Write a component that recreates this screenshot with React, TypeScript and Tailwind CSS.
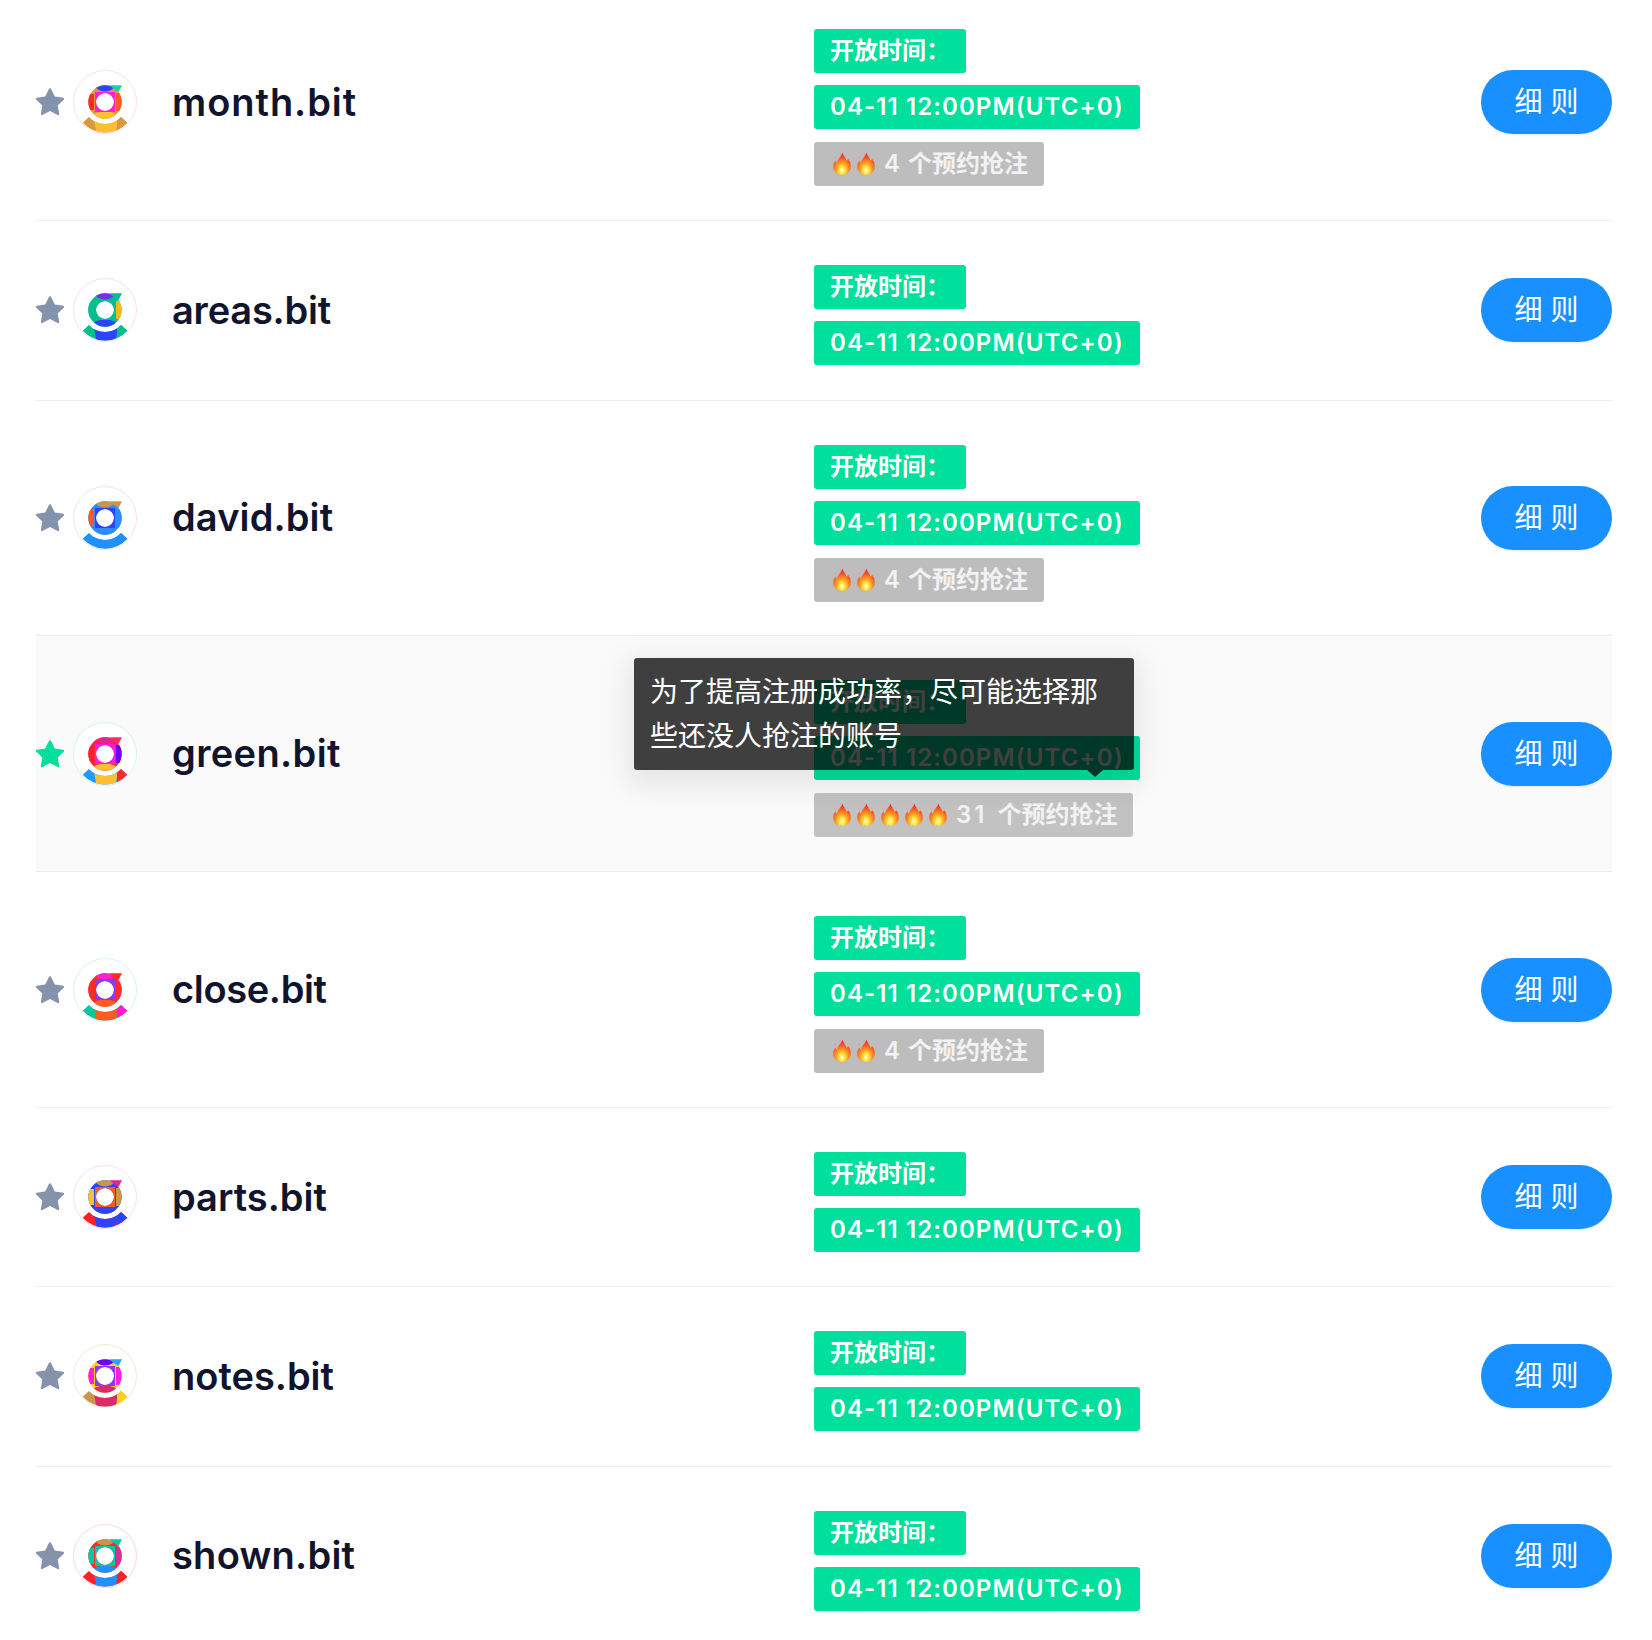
import React from 'react';

type Logo = {
  border: string;
  base: string;
  top: string;
  left: string;
  right: string;
  bottom: string;
  inner: string;
  tail: string;
  smile: string;
  smileMid: string;
  smileEnd: string;
};

type Item = { name: string; tracking: string; logo: Logo; hot?: number; count?: number; active?: boolean };

const items: Item[] = [
  {
    name: 'month.bit', tracking: 'tracking-[0.95px]', hot: 2, count: 4,
    logo: { border: '#ffe3da', base: '#d99a3f', top: '#2b44ff', left: '#ff2b2b', right: '#ff5a1f', bottom: '#ffbf2e', inner: '#ff1fd6', tail: '#12d0b0', smile: '#d99a3f', smileMid: '#ffbf2e', smileEnd: '#d99a3f' },
  },
  {
    name: 'areas.bit', tracking: 'tracking-[-0.2px]',
    logo: { border: '#fbdcfb', base: '#00bf8f', top: '#7a2bf0', left: '#00bf8f', right: '#ffb520', bottom: '#2b44ff', inner: '#00bf8f', tail: '#00bf8f', smile: '#00bf8f', smileMid: '#2b44ff', smileEnd: '#00bf8f' },
  },
  {
    name: 'david.bit', tracking: 'tracking-[0.13px]', hot: 2, count: 4,
    logo: { border: '#fbdfe8', base: '#2f8bff', top: '#c9964a', left: '#ff5a1f', right: '#2f8bff', bottom: '#2f8bff', inner: '#2b44ff', tail: '#c9964a', smile: '#1f90ff', smileMid: '#1f90ff', smileEnd: '#1f90ff' },
  },
  {
    name: 'green.bit', tracking: 'tracking-[0.37px]', hot: 5, count: 31, active: true,
    logo: { border: '#d5f5ee', base: '#ff2244', top: '#e0259a', left: '#ff2222', right: '#6a00ff', bottom: '#ffbf2e', inner: '#ff1fd6', tail: '#ff2b6a', smile: '#1f9bff', smileMid: '#ffbf2e', smileEnd: '#ff2b2b' },
  },
  {
    name: 'close.bit', tracking: 'tracking-[-0.34px]', hot: 2, count: 4,
    logo: { border: '#d5f5ee', base: '#ff2b2b', top: '#ff1fd6', left: '#ff2b2b', right: '#ff2b2b', bottom: '#ff5a1f', inner: '#8a3bf0', tail: '#ff2b2b', smile: '#00c9a0', smileMid: '#ff5a1f', smileEnd: '#ff1fd6' },
  },
  {
    name: 'parts.bit', tracking: 'tracking-[0px]',
    logo: { border: '#fbdcfb', base: '#2b44ff', top: '#c9964a', left: '#ffbf2e', right: '#c9964a', bottom: '#2b44ff', inner: '#ff5a1f', tail: '#e0259a', smile: '#ff2222', smileMid: '#2b44ff', smileEnd: '#2b44ff' },
  },
  {
    name: 'notes.bit', tracking: 'tracking-[0px]',
    logo: { border: '#f5e8d8', base: '#ffd020', top: '#6a00ff', left: '#ff1fd6', right: '#ff1fd6', bottom: '#d92b6a', inner: '#8a3bf0', tail: '#1fa8ff', smile: '#c9964a', smileMid: '#d92b6a', smileEnd: '#ffd020' },
  },
  {
    name: 'shown.bit', tracking: 'tracking-[0.25px]',
    logo: { border: '#ffd8d8', base: '#ff2b2b', top: '#c9964a', left: '#00c9a8', right: '#d92b9a', bottom: '#1f90ff', inner: '#00c9a8', tail: '#00c9a8', smile: '#ff2222', smileMid: '#1f90ff', smileEnd: '#ff2222' },
  },
];

const Star = ({ color }: { color: string }) => (
  <svg viewBox="64 64 896 896" width="30" height="30" fill={color} className="shrink-0 -ml-[1px] mt-[2px]">
    <path d="M908.1 353.1l-253.9-36.9L540.7 86.1c-3.1-6.3-8.2-11.4-14.5-14.5-15.8-7.8-35-1.3-42.9 14.5L369.8 316.2l-253.9 36.9c-7 1-13.4 4.3-18.3 9.3a32.05 32.05 0 0 0 .6 45.3l183.7 179.1-43.4 252.9a31.95 31.95 0 0 0 46.4 33.7L512 754l227.1 119.4c6.2 3.3 13.4 4.4 20.3 3.2 17.4-3 29.1-19.5 26.1-36.9l-43.4-252.9 183.7-179.1c5-4.9 8.3-11.3 9.3-18.3 2.7-17.5-9.5-33.7-27-36.3z" />
  </svg>
);

// ring with coloured patches, tail top right, smile cut off by the circle
const Avatar = ({ logo, id }: { logo: Logo; id: string }) => (
  <svg viewBox="0 0 64 64" width="64" height="64" className="shrink-0 ml-[8px]">
    <defs>
      <clipPath id={`ring-${id}`}>
        <path clipRule="evenodd" d="M32 15.3a16.7 16.7 0 1 1 0 33.4 16.7 16.7 0 1 1 0-33.4zM32 23a9 9 0 1 0 0 18 9 9 0 1 0 0-18z" />
      </clipPath>
      <clipPath id={`smile-${id}`}>
        <path d="M15.9 47A22 22 0 0 0 48.1 47L54.3 52.8A30.5 30.5 0 0 1 9.7 52.8Z" />
      </clipPath>
    </defs>
    <circle cx="32" cy="32" r="31.5" fill="#fff" stroke={logo.border} strokeWidth="1" />
    <g clipPath={`url(#ring-${id})`}>
      <rect x="14" y="14" width="36" height="36" fill={logo.base} />
      <ellipse cx="32" cy="15" rx="10" ry="6.5" fill={logo.top} />
      <rect x="14" y="24" width="7" height="16" fill={logo.left} />
      <rect x="43" y="23" width="7" height="18" fill={logo.right} />
      <ellipse cx="32" cy="47" rx="12" ry="5.5" fill={logo.bottom} />
      <rect x="22" y="22" width="20" height="20" fill={logo.inner} />
    </g>
    <path d="M36 15.300H49L45.500 22L41.500 19.500Q38.500 16.500 36 15.300Z" fill={logo.tail} />
    <g clipPath={`url(#smile-${id})`}>
      <rect x="6" y="44" width="52" height="22" fill={logo.smile} />
      <path d="M20 44H46L42 66H24Z" fill={logo.smileMid} />
      <rect x="44" y="44" width="14" height="22" fill={logo.smileEnd} />
    </g>
  </svg>
);

const Flame = ({ id }: { id: string }) => (
  <svg viewBox="0 0 18 24" width="18" height="24" className="shrink-0 mx-[3px]">
    <defs>
      <radialGradient id={`fire-${id}`} cx="50%" cy="80%" r="72%">
        <stop offset="0%" stopColor="#fffde8" />
        <stop offset="20%" stopColor="#ffe94a" />
        <stop offset="45%" stopColor="#ffa51f" />
        <stop offset="75%" stopColor="#fb5a26" />
        <stop offset="100%" stopColor="#ee2f2a" />
      </radialGradient>
    </defs>
    <path d="M9.500 .5C10 4 13 5.500 13.500 9c.8-.5 1.400-1.200 1.600-2C17 9 17.800 12 17.800 14.500c0 5-3.800 8.300-8.800 8.300S.2 19.500.2 14.500C.2 12 1.300 10 2.600 8.600c.2 1.200.7 2 1.500 2.500C4.200 7 8 5 9.500 .5z" fill={`url(#fire-${id})`} />
    <circle cx="1.800" cy="5.500" r=".7" fill="#ff8a5a" />
  </svg>
);

const Tag = ({ className, children }: { className: string; children: React.ReactNode }) => (
  <div className={`flex items-center h-[44px] w-fit px-[16px] rounded-[3px] text-[24px] font-semibold leading-none ${className}`}>
    {children}
  </div>
);

const Row = ({ item, first }: { item: Item; first: boolean }) => (
  <div className={`relative flex items-center border-b border-[#ececec] ${first ? '-mt-[15px] pb-[0.5px]' : ''} ${item.active ? 'bg-[#fafafa]' : ''}`}>
    <div className="flex items-center w-[778px]">
      <Star color={item.active ? '#00df9b' : '#8492ac'} />
      <Avatar logo={item.logo} id={item.name.split('.')[0]} />
      <span className={`ml-[35px] -mt-[1px] text-[#11142d] text-[38px] font-semibold leading-none ${item.tracking}`}>{item.name}</span>
    </div>
    <div className="flex-1 pt-[44px] pb-[21.3px]">
      <Tag className="mb-[12px] bg-[#00df9b] text-white">开放时间：</Tag>
      <Tag className="mb-[13px] bg-[#00df9b] text-white tracking-[1.1px]">04-11 12:00PM(UTC+0)</Tag>
      {item.hot && (
        <Tag className={`mb-[12.5px] text-[#f2f2f2] font-medium ${item.active ? 'bg-[#c2c2c2]' : 'bg-[#bdbdbd]'}`}>
          {Array.from({ length: item.hot }).map((_, i) => (
            <Flame key={i} id={`${item.name.split('.')[0]}-${i}`} />
          ))}
          <span className={`ml-[6px] font-semibold ${item.active ? 'mr-[10px] tracking-[3px]' : 'mr-[6px] tracking-[2px]'}`}>{item.count}</span>
          个预约抢注
        </Tag>
      )}
    </div>
    <button className="w-[131px] h-[64px] rounded-full bg-[#1890ff] text-white text-[28px] shadow-[0_2px_0_rgba(0,0,0,0.045)]">
      细 则
    </button>
    {item.active && (
      <div className="absolute left-[598px] top-[22px] w-[500px] h-[112px] px-[16px] py-[12px] rounded-[3px] bg-black/75 text-white text-[28px] leading-[44px] shadow-[0_9px_28px_8px_rgba(0,0,0,0.08)]">
        为了提高注册成功率，尽可能选择那些还没人抢注的账号
        <div className="absolute left-[453px] -bottom-[7px] w-0 h-0 border-x-[8px] border-x-transparent border-t-[7px] border-t-black/75" />
      </div>
    )}
  </div>
);

export default function App() {
  return (
    <div className="w-[1652px] h-[1640px] overflow-hidden bg-white pl-[36px] pr-[40px] font-['Inter','Noto_Sans_CJK_SC',sans-serif]">
      {items.map((item, i) => (
        <Row key={item.name} item={item} first={i === 0} />
      ))}
    </div>
  );
}
